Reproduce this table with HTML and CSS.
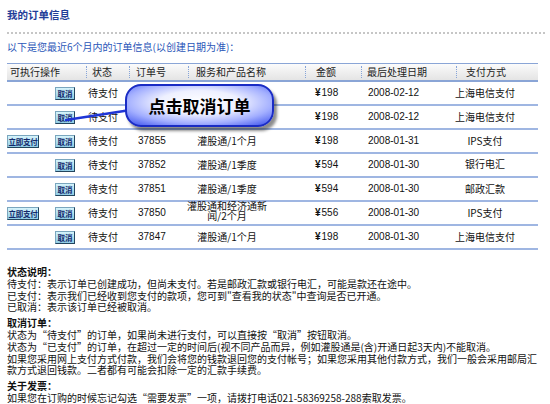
FILE: index.html
```html
<!DOCTYPE html>
<html lang="zh-CN">
<head>
<meta charset="utf-8">
<title>我的订单信息</title>
<link rel="stylesheet" href="styles.css">
</head>
<body>
<div class="page">
  <h1 class="title">我的订单信息</h1>
  <div class="rule"></div>
  <p class="intro">以下是您最近6个月内的订单信息(以创建日期为准)：</p>

  <div class="orders">
    <div class="thead">
      <span class="h1">可执行操作</span>
      <span class="h2">状态</span>
      <span class="h3">订单号</span>
      <span class="h4">服务和产品名称</span>
      <span class="h5">金额</span>
      <span class="h6">最后处理日期</span>
      <span class="h7">支付方式</span>
    </div>

    <div class="row">
      <div class="ops"><span class="btn cancel">取消</span></div>
      <div class="status">待支付</div>
      <div class="num"></div>
      <div class="svc"></div>
      <div class="amt"><b>¥</b>198</div>
      <div class="date">2008-02-12</div>
      <div class="pay">上海电信支付</div>
    </div>
    <div class="row">
      <div class="ops"><span class="btn cancel">取消</span></div>
      <div class="status">待支付</div>
      <div class="num"></div>
      <div class="svc"></div>
      <div class="amt"><b>¥</b>198</div>
      <div class="date">2008-02-12</div>
      <div class="pay">上海电信支付</div>
    </div>
    <div class="row">
      <div class="ops"><span class="btn paynow">立即支付</span><span class="btn cancel">取消</span></div>
      <div class="status">待支付</div>
      <div class="num">37855</div>
      <div class="svc">灌股通/1个月</div>
      <div class="amt"><b>¥</b>198</div>
      <div class="date">2008-01-31</div>
      <div class="pay">IPS支付</div>
    </div>
    <div class="row">
      <div class="ops"><span class="btn cancel">取消</span></div>
      <div class="status">待支付</div>
      <div class="num">37852</div>
      <div class="svc">灌股通/1季度</div>
      <div class="amt"><b>¥</b>594</div>
      <div class="date">2008-01-30</div>
      <div class="pay up">银行电汇</div>
    </div>
    <div class="row">
      <div class="ops"><span class="btn cancel">取消</span></div>
      <div class="status">待支付</div>
      <div class="num">37851</div>
      <div class="svc">灌股通/1季度</div>
      <div class="amt"><b>¥</b>594</div>
      <div class="date">2008-01-30</div>
      <div class="pay">邮政汇款</div>
    </div>
    <div class="row">
      <div class="ops"><span class="btn paynow">立即支付</span><span class="btn cancel">取消</span></div>
      <div class="status">待支付</div>
      <div class="num">37850</div>
      <div class="svc wrap">灌股通和经济通新闻/2个月</div>
      <div class="amt"><b>¥</b>556</div>
      <div class="date">2008-01-30</div>
      <div class="pay">IPS支付</div>
    </div>
    <div class="row">
      <div class="ops"><span class="btn cancel">取消</span></div>
      <div class="status">待支付</div>
      <div class="num">37847</div>
      <div class="svc">灌股通/1个月</div>
      <div class="amt"><b>¥</b>198</div>
      <div class="date">2008-01-30</div>
      <div class="pay">上海电信支付</div>
    </div>

    <svg class="connector" width="531" height="190" viewBox="0 0 531 190">
      <line x1="59" y1="57" x2="130" y2="46" stroke="#1f35d6" stroke-width="2.4" stroke-linecap="round"/>
    </svg>
    <div class="callout">点击取消订单</div>
  </div>

  <div class="notes">
    <h2>状态说明：</h2>
    <p>待支付：表示订单已创建成功，但尚未支付。若是邮政汇款或银行电汇，可能是款还在途中。<br>已支付：表示我们已经收到您支付的款项，您可到"查看我的状态"中查询是否已开通。<br>已取消：表示该订单已经被取消。</p>
    <h2>取消订单：</h2>
    <p>状态为<span class="q o">“</span>待支付<span class="q c">”</span>的订单，如果尚未进行支付，可以直接按<span class="q o">“</span>取消<span class="q c">”</span>按钮取消。<br>状态为<span class="q o">“</span>已支付<span class="q c">”</span>的订单，在超过一定的时间后(视不同产品而异，例如灌股通是(含)开通日起3天内)不能取消。<br>如果您采用网上支付方式付款，我们会将您的钱款退回您的支付帐号；如果您采用其他付款方式，我们一般会采用邮局汇款方式退回钱款。二者都有可能会扣除一定的汇款手续费。</p>
    <h2>关于发票：</h2>
    <p>如果您在订购的时候忘记勾选<span class="q o">“</span>需要发票<span class="q c">”</span>一项，请拨打电话021-58369258-288索取发票。</p>
  </div>
</div>
</body>
</html>
```

FILE: styles.css
```css
html, body {
  margin: 0;
  background: #ffffff;
}
body {
  font-family: "Noto Sans CJK SC", "Liberation Sans", sans-serif;
  font-size: 10px;
  color: #111111;
}
.page {
  padding: 8px 5px 0 7px;
}
.title {
  margin: 0;
  font-size: 10.5px;
  line-height: 14px;
  font-weight: bold;
  color: #1f3d98;
}
.rule {
  margin-top: 10px;
  border-top: 2px dotted #c6c6c6;
}
.intro {
  margin: 6px 0 0;
  line-height: 14px;
  color: #2a56b8;
}

/* ---- orders table ---- */
.orders {
  position: relative;
  margin-top: 9px;
  width: 531px;
}
.thead {
  display: grid;
  grid-template-columns: 79px 43px 59px 117px 56px 95px 82px;
  height: 16px;
  border-top: 1px solid #8aa5d6;
  border-bottom: 2px solid #8aa5d6;
  background: linear-gradient(#fbfbfb, #e4e4e4);
}
.thead span {
  margin: 2px 0;
  line-height: 12px;
  color: #222222;
  border-left: 1px dotted #86a4d8;
}
.thead .h1 { border-left: none; padding-left: 3px; }
.thead .h2 { padding-left: 5px; }
.thead .h3 { padding-left: 6px; }
.thead .h4 { padding-left: 7px; }
.thead .h5 { padding-left: 10px; }
.thead .h6 { padding-left: 5px; }
.thead .h7 { padding-left: 9px; }

.row {
  display: grid;
  grid-template-columns: 79px 44px 56px 82px 97px 71px 102px;
  height: 22px;
  align-items: center;
  border-bottom: 2px solid #9fb6e2;
  line-height: 12px;
}
.ops {
  display: flex;
  align-items: center;
  padding-right: 11px;
}
.btn {
  box-sizing: border-box;
  display: inline-block;
  height: 13px;
  line-height: 11px;
  text-align: center;
  font-size: 7.5px;
  font-weight: bold;
  color: #13296b;
  background: linear-gradient(#d6f3fb, #8fcde6);
  border: 1px solid;
  border-color: #7aa6be #23455e #23455e #7aa6be;
}
.btn.paynow {
  width: 32px;
  letter-spacing: -0.3px;
}
.btn.cancel {
  width: 20px;
  margin-left: auto;
}
.status {
  padding-left: 2px;
}
.num, .date, .amt {
  font-family: "Liberation Sans", sans-serif;
}
.num {
  padding-left: 8px;
}
.svc {
  text-align: center;
}
.svc.wrap {
  line-height: 10px;
  margin-top: -4px;
}
.amt {
  padding-left: 47px;
}
.amt b {
  margin-right: 1px;
}
.date {
  padding-left: 3px;
}
.pay {
  text-align: center;
  padding-right: 4px;
}
.pay.up {
  margin-top: -3px;
}

/* ---- callout overlay ---- */
.connector {
  position: absolute;
  left: 0;
  top: 0;
  pointer-events: none;
}
.callout {
  position: absolute;
  left: 118px;
  top: 21px;
  box-sizing: border-box;
  width: 149px;
  height: 43px;
  border: 2px solid #1a2cc4;
  border-radius: 16px;
  background: radial-gradient(ellipse 70% 75% at 50% 42%, #ffffff 0%, #eef0ff 40%, #a3afff 72%, #4a5ef0 100%);
  box-shadow: 3px 4px 3px rgba(0, 0, 0, 0.45);
  display: flex;
  align-items: center;
  justify-content: center;
  font-size: 17px;
  font-weight: bold;
  color: #000000;
}

/* ---- notes ---- */
.notes {
  margin-top: 16px;
  width: 536px;
  line-height: 11.8px;
}
.notes h2 {
  margin: 0;
  font-size: 10px;
  font-weight: bold;
  line-height: 11.8px;
}
.notes p {
  margin: 0 0 4px;
}
.q {
  display: inline-block;
  width: 1em;
}
.q.o {
  text-align: right;
}
.q.c {
  text-align: left;
}
```
